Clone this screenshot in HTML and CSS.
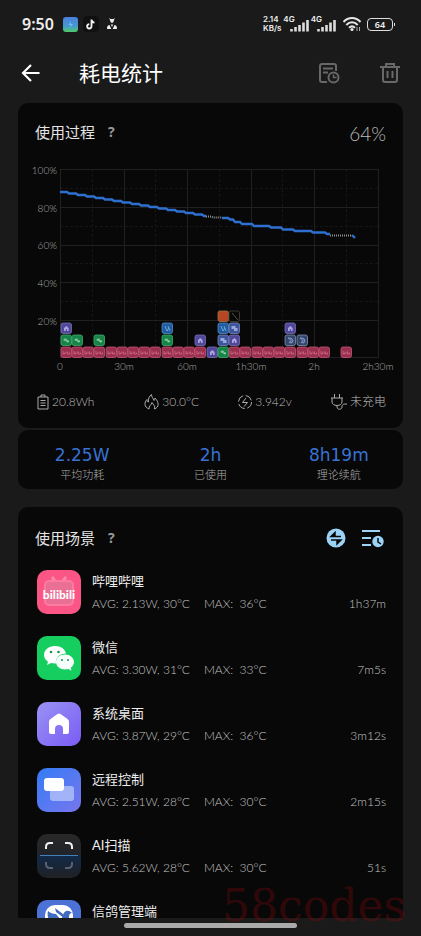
FILE: index.html
```html
<!DOCTYPE html>
<html lang="zh-CN">
<head>
<meta charset="utf-8">
<meta name="viewport" content="width=device-width, initial-scale=1">
<title>耗电统计</title>
<link rel="stylesheet" href="styles.css">
</head>
<body>
<div class="status">
  <span class="clock">9:50</span>
  <svg class="app-dot" viewBox="0 0 15 15" width="15" height="15"><defs><linearGradient id="gs" x1="0" y1="0" x2="0" y2="1"><stop offset="0" stop-color="#4a80dc"/><stop offset=".6" stop-color="#4797d0"/><stop offset="1" stop-color="#4fcb68"/></linearGradient></defs><rect width="15" height="15" rx="3" fill="url(#gs)"/><path d="M8 4 5.500 8H8L7 11l3-4H7.500z" fill="#78bdef"/></svg>
  <svg class="app-dot" viewBox="0 0 16 16" width="16" height="16"><rect width="16" height="16" rx="4" fill="#101010"/><path d="M8.500 3.500v6.800a2.200 2.200 0 1 1-2.200-2.200M8.500 4c.3 1.800 1.300 2.500 3 2.700" fill="none" stroke="#f2f2f2" stroke-width="1.800"/></svg>
  <svg class="app-dot last" viewBox="0 0 12 12" width="12" height="12" fill="#eee"><path d="m3 0 1.500 1h3L9 0 8 2 7.500 4 6 5 4.500 4 4 2zM1 11c0-3 1-4 2.500-4L5.300 11zM11 11c0-3-1-4-2.500-4L6.700 11zM4.800 6.500h2.400L6 9z"/></svg>
  <span class="speed"><span>2.14</span><span>KB/s</span></span>
  <span class="net">4G</span>
  <svg class="bars" viewBox="0 0 20 13" width="20" height="13"><path d="M2.500 10v2.500M6.500 8v4.500M10.500 6v6.500M14.500 3.500v9M18.500 1v11.500" stroke="#ddd" stroke-width="2.600"/></svg>
  <span class="net">4G</span>
  <svg class="bars" viewBox="0 0 20 13" width="20" height="13"><path d="M2.500 10v2.500M6.500 8v4.500M10.500 6v6.500M14.500 3.500v9M18.500 1v11.500" stroke="#ddd" stroke-width="2.600"/></svg>
  <svg class="wifi" viewBox="0 0 20 16" width="20" height="16"><path d="M1.500 6C6.500.8 13.500.8 18.500 6M4.300 9c3.400-3.600 8-3.600 11.400 0M7 11.700c2-1.800 4-1.800 6 0" fill="none" stroke="#e6e6e6" stroke-width="2"/><circle cx="10" cy="13.500" r="1.600" fill="#e6e6e6"/><path d="M15 11v4M17.500 11v4" stroke="#aaa"/></svg>
  <span class="battery">64</span>
</div>

<header class="bar">
  <button class="icon-btn" aria-label="返回"><svg viewBox="0 0 20 20" width="20" height="20"><path d="M18.500 10H2M10 2 2 10l8 8" fill="none" stroke="#fff" stroke-width="2.200"/></svg></button>
  <h1>耗电统计</h1>
  <button class="icon-btn" aria-label="历史记录"><svg viewBox="0 0 22 22" width="22" height="22" fill="none" stroke="#686868" stroke-width="2"><path d="M9 20H4a2 2 0 0 1-2-2V4a2 2 0 0 1 2-2h12a2 2 0 0 1 2 2v5M5 6.500h10M5 10.500h5"/><circle cx="15.500" cy="15.500" r="5"/><path d="M15.500 12.500v3h3" stroke-width="1.500"/></svg></button>
  <button class="icon-btn trash" aria-label="删除"><svg viewBox="0 0 22 22" width="22" height="22" fill="none" stroke="#686868" stroke-width="2"><path d="M1 5h20M7 5V2h8v3M4 5v13a2 2 0 0 0 2 2h10a2 2 0 0 0 2-2V5M8.500 9v7M13.500 9v7"/></svg></button>
</header>

<main>
  <section class="card process">
    <div class="card-head">
      <h2>使用过程</h2><button class="help" aria-label="使用过程说明">?</button>
      <span class="percent">64%</span>
    </div>
    <svg class="chart" viewBox="18 160 385 214" role="img" aria-label="电量变化">
      <defs>
        <g id="r"><rect width="10.500" height="10.500" rx="2" fill="#99304f" stroke="#c65475" stroke-width=".8"/><path d="M2 4v3h1.500V5.500M5 4.500V7M6.500 4.500V7h2V5.500" fill="none" stroke="#d87391" stroke-width=".7"/></g>
        <g id="g"><rect width="10.500" height="10.500" rx="2" fill="#168446" stroke="#45ab70" stroke-width=".8"/><ellipse cx="4.300" cy="4.700" rx="1.800" ry="1.300" fill="#7cc497"/><ellipse cx="6.600" cy="6.300" rx="1.500" ry="1.100" fill="#8fcea6"/></g>
        <g id="p"><rect width="10.500" height="10.500" rx="2" fill="#51479b" stroke="#7770b2" stroke-width=".8"/><path d="M3 8V5l2.300-2 2.300 2v3H6V6.300H4.700V8z" fill="#aaa6df"/></g>
        <g id="b"><rect width="10.500" height="10.500" rx="2" fill="#205c9f" stroke="#568ac2" stroke-width=".8"/><path d="m3 3 2 5 2-3M6 3l2 5" fill="none" stroke="#7bb7e8" stroke-width=".8"/></g>
        <g id="c"><rect width="10.500" height="10.500" rx="2" fill="#3d55a0" stroke="#7886ae" stroke-width=".8"/><path d="M2.500 3h4v3h-4zM5 5h3.500v3H5z" fill="#99a8d9"/></g>
        <g id="w"><rect width="10.500" height="10.500" rx="2" fill="#34466c" stroke="#8291b4" stroke-width=".8"/><path d="M3 3h3l2 2-1 3-3-.5 2-2z" fill="#4d62a0" stroke="#b4bad4" stroke-width=".6"/></g>
      </defs>
      <path class="minor" d="M92.500 169v189M155.500 169v189M219.500 169v189M282.500 169v189M346.500 169v189M60 188.500h318M60 226.500h318M60 263.500h318M60 301.500h318"/>
      <path class="grid" d="M60.500 169v189M124.500 169v189M187.500 169v189M251.500 169v189M314.500 169v189M378.500 169v189M60 169.500h318M60 207.500h318M60 245.500h318M60 282.500h318M60 320.500h318M60 357.500h318"/>
      <g class="y-axis"><text x="57" y="174">100%</text><text x="57" y="212">80%</text><text x="57" y="249">60%</text><text x="57" y="287">40%</text><text x="57" y="325">20%</text></g>
      <g class="x-axis"><text x="60" y="370">0</text><text x="124" y="370">30m</text><text x="187" y="370">60m</text><text x="251" y="370">1h30m</text><text x="314" y="370">2h</text><text x="378" y="370">2h30m</text></g>
      <path class="level" d="M60 192h7l2 1.500h7l2 1.500h7l2 1.500h7l2 1.500h7l2 1.500h7l2 1.500h7l2 1.500h7l2 1.500h7l2 1.500h7l2 1.500h7l2 1.500h7l2 1.500h7l2 1.500h7l2 1.500h7l2 1.500h7l2 1.500h2M222 218h6l2 1.500h3l2 2.500h5l2 2h10l2 2h15l2 1.500h10l2 2h10l2 1.500h16l2 1.500h12l2 1.500h3M352 235l3 3"/>
      <path class="idle" d="M206 216.500h5l2 1h9M330 235.500h22"/>
      <use href="#r" x="61" y="347"/><use href="#r" x="72" y="347"/><use href="#r" x="83" y="347"/><use href="#r" x="94" y="347"/><use href="#r" x="106" y="347"/><use href="#r" x="117" y="347"/><use href="#r" x="128" y="347"/><use href="#r" x="139" y="347"/><use href="#r" x="150" y="347"/><use href="#r" x="162" y="347"/><use href="#r" x="173" y="347"/><use href="#r" x="184" y="347"/><use href="#r" x="195" y="347"/><use href="#p" x="207" y="347"/><use href="#g" x="218" y="347"/><use href="#r" x="229" y="347"/><use href="#r" x="240" y="347"/><use href="#r" x="252" y="347"/><use href="#r" x="263" y="347"/><use href="#r" x="274" y="347"/><use href="#r" x="285" y="347"/><use href="#r" x="297" y="347"/><use href="#r" x="308" y="347"/><use href="#r" x="319" y="347"/><use href="#r" x="341" y="347"/>
      <use href="#g" x="61" y="335"/><use href="#g" x="72" y="335"/><use href="#g" x="94" y="335"/><use href="#g" x="162" y="335"/><use href="#p" x="195" y="335"/><use href="#c" x="218" y="335"/><use href="#p" x="229" y="335"/><use href="#w" x="285" y="335"/><use href="#w" x="297" y="335"/>
      <use href="#p" x="61" y="323"/><use href="#b" x="162" y="323"/><use href="#b" x="218" y="323"/><use href="#c" x="229" y="323"/><use href="#p" x="285" y="323"/>
      <rect x="218" y="311" width="10.500" height="10.500" rx="2" fill="#b74625" stroke="#9b7c45" stroke-width=".8"/>
      <rect x="229" y="311" width="10.500" height="10.500" rx="2" fill="#080808" stroke="#4b4638" stroke-width=".8"/><path d="m232 313 6 7" stroke="#6b6754" stroke-width=".8"/>
    </svg>
    <ul class="facts">
      <li><svg viewBox="0 0 14 18" width="14" height="18"><path d="M2 4h10v12H2zM5 4V2h4v2M4.500 7.500h5M4.500 10h5M4.500 12.500h5"/></svg>20.8Wh</li>
      <li><svg viewBox="0 0 16 18" width="16" height="18"><path d="M5 16C0 14 0 9.500 3 6.500c0 2 .5 2.500 1.500 2.500C4 6 5 3.500 7.500 1.500 7.500 4 9 5 10 7.500c.8-.5 1-1.500 1-2.500 4 4 4.500 9-.5 11 1-3-1-4-2.500-6.500C7.500 12 4.500 13 5 16z"/></svg>30.0°C</li>
      <li><svg viewBox="0 0 16 18" width="16" height="18"><circle cx="8" cy="9" r="6.500" stroke-dasharray="7.500 2.710"/><path d="M9 5 5.500 9.500h5L7 13.500"/></svg>3.942v</li>
      <li><svg viewBox="0 0 18 18" width="18" height="18"><path d="M4.500 1v4M9.500 1v4M1 5h12M2 5v4c0 2 2 3.500 5 3.500s5-1.500 5-3.500V5M7 12.500V14c0 3 5 3 5 0s2-3 5-3"/></svg>未充电</li>
    </ul>
  </section>

  <section class="card totals">
    <div><strong>2.25W</strong><span>平均功耗</span></div>
    <div><strong>2h</strong><span>已使用</span></div>
    <div><strong>8h19m</strong><span>理论续航</span></div>
  </section>

  <section class="card scenes">
    <div class="card-head">
      <h2>使用场景</h2><button class="help" aria-label="使用场景说明">?</button>
      <button class="icon-btn tool" aria-label="切换"><svg viewBox="0 0 20 20" width="20" height="20"><circle cx="10" cy="10" r="9.500" fill="#9bd2f6"/><path d="M15 8.500H5L9 4.500v4M5 12h10l-4 4v-4" fill="#080808" stroke="#080808" stroke-width="1.500"/></svg></button>
      <button class="icon-btn" aria-label="按时间排序"><svg viewBox="0 0 24 20" width="24" height="20"><path d="M0 3h18M0 10h9M0 17h9" stroke="#9bd2f6" stroke-width="2"/><circle cx="16" cy="13.500" r="5.700" fill="#9bd2f6"/><path d="M16 10v4l3 2" fill="none" stroke="#080808" stroke-width="1.500"/></svg></button>
    </div>
    <ul class="apps">
      <li>
        <svg class="logo" viewBox="0 0 44 44"><rect width="44" height="44" rx="10" fill="#fb5585"/><path d="m15 7 3 4M29 7l-3 4" stroke="#fc89a9" stroke-width="3"/><rect x="8" y="11" width="28" height="24" rx="4" fill="#e96f94" stroke="#fc7b9f" stroke-width="2"/><text class="brand" x="22" y="29">bilibili</text></svg>
        <div class="info"><h3>哔哩哔哩</h3><p><span>AVG: 2.13W, 30°C</span><span>MAX:&nbsp; 36°C</span></p></div><time>1h37m</time>
      </li>
      <li>
        <svg class="logo" viewBox="0 0 44 44"><rect width="44" height="44" rx="10" fill="#15ce5f"/><path d="M18 10C11.500 10 7 14 7 19c0 3 1.500 5 4 6.700L10 29l4-2 4 .5h1c-1-6 4-10 10-10C28 13 24 10 18 10z" fill="#fff"/><path d="M28 18.500c-5.500 0-9 3.500-9 7.500s4 7.500 9 7.500l3.300-.5 3.200 1.700-.8-3C35.700 30.500 37 28.500 37 26c0-4-4-7.500-9-7.500z" fill="#f6fff9"/><g fill="#17984c"><circle cx="14" cy="16" r="1.300"/><circle cx="21.500" cy="16" r="1.300"/><circle cx="25" cy="24" r="1"/><circle cx="31" cy="24" r="1"/></g></svg>
        <div class="info"><h3>微信</h3><p><span>AVG: 3.30W, 31°C</span><span>MAX:&nbsp; 33°C</span></p></div><time>7m5s</time>
      </li>
      <li>
        <svg class="logo" viewBox="0 0 44 44"><defs><linearGradient id="gh" x1="0" y1="0" x2="1" y2="1"><stop stop-color="#9992f4"/><stop offset="1" stop-color="#7a5cf5"/></linearGradient></defs><rect width="44" height="44" rx="10" fill="url(#gh)"/><path d="M14 32q-2 0-2-2V20q0-2 1.500-3l7-5q1.500-1 3 0l7 5q1.500 1 1.500 3v10q0 2-2 2h-4v-5a4 4 0 0 0-8 0v5z" fill="#fff"/></svg>
        <div class="info"><h3>系统桌面</h3><p><span>AVG: 3.87W, 29°C</span><span>MAX:&nbsp; 36°C</span></p></div><time>3m12s</time>
      </li>
      <li>
        <svg class="logo" viewBox="0 0 44 44"><defs><linearGradient id="gr" x1="0" y1="0" x2="1" y2="1"><stop stop-color="#337cf7"/><stop offset="1" stop-color="#7876ec"/></linearGradient></defs><rect width="44" height="44" rx="10" fill="url(#gr)"/><rect x="13" y="18" width="24" height="15" rx="3" fill="#b9c7fb" fill-opacity=".75"/><rect x="7" y="10" width="20" height="13" rx="3" fill="#fff"/></svg>
        <div class="info"><h3>远程控制</h3><p><span>AVG: 2.51W, 28°C</span><span>MAX:&nbsp; 30°C</span></p></div><time>2m15s</time>
      </li>
      <li>
        <svg class="logo" viewBox="0 0 44 44"><defs><linearGradient id="ga" x1="0" y1="0" x2="0" y2="1"><stop stop-color="#282828"/><stop offset=".48" stop-color="#202329"/><stop offset=".5" stop-color="#122947"/><stop offset="1" stop-color="#202124"/></linearGradient></defs><rect width="44" height="44" rx="10" fill="url(#ga)"/><path d="M9 15v-2q0-4 4-4h3M28 9h3q4 0 4 4v2" fill="none" stroke="#eee" stroke-width="2"/><path d="M9 28v2q0 4 4 4h3M28 34h3q4 0 4-4v-2" fill="none" stroke="#596273" stroke-width="2"/><path d="M3 21.500h38" stroke="#4381b9"/></svg>
        <div class="info"><h3>AI扫描</h3><p><span>AVG: 5.62W, 28°C</span><span>MAX:&nbsp; 30°C</span></p></div><time>51s</time>
      </li>
      <li>
        <svg class="logo" viewBox="0 0 44 44"><rect width="44" height="44" rx="10" fill="#4d72d6"/><rect x="8" y="5" width="28" height="34" rx="10" fill="#fff"/><path d="M11 11c2 2 5 3 8 3l5 6 2-5c1-4 5-6 9-2-3 0-3 3-3 6 0 7-5 12-11 12-5 0-9-3-10-7l3-1c-3-3-4-8-3-12z" fill="#416bc0"/><path d="m18 8 8 6 1 4-8-6z" fill="#416bc0"/></svg>
        <div class="info"><h3>信鸽管理端</h3></div>
      </li>
    </ul>
  </section>
</main>
<footer class="nav"><span class="handle"></span></footer>
<div class="watermark">58codes</div>
</body>
</html>
```
FILE: styles.css
```css
* { box-sizing: border-box; }
body {
  margin: 0;
  height: 100vh;
  display: flex;
  flex-direction: column;
  overflow: hidden;
  position: relative;
  background: #1a1a1a;
  color: #ddd;
  font-family: Lato, "Noto Sans CJK SC", sans-serif;
}
h1, h2, h3, p, ul { margin: 0; padding: 0; font-weight: 400; }
ul { list-style: none; }
button { padding: 0; border: 0; background: none; color: inherit; font: inherit; }
svg { display: block; flex: none; }

.status {
  flex: none;
  display: flex;
  align-items: center;
  height: 48px;
  padding: 0 28px 0 22px;
  font-family: "Noto Sans", sans-serif;
  font-weight: 600;
  color: #eee;
}
.clock { font-size: 16px; margin-right: 9px; }
.app-dot { margin-right: 5px; }
.app-dot.last { margin: 0 auto 0 2px; }
.speed { display: flex; flex-direction: column; font: 600 8px/9px Inter, sans-serif; margin-right: 2px; }
.net { font: 600 8px/9px Inter, sans-serif; align-self: flex-start; margin-top: 15px; }
.bars { margin: 2px 2px 0 -6px; }
.wifi { margin: 0 5px 0 4px; }
.battery {
  position: relative;
  width: 26px;
  height: 13px;
  border: 1px solid #ddd;
  border-radius: 4px;
  font-size: 9px;
  line-height: 11px;
  text-align: center;
}
.battery::after {
  content: "";
  position: absolute;
  right: -3px;
  top: 4px;
  width: 1px;
  height: 3px;
  background: #ddd;
}

.bar { flex: none; display: flex; align-items: center; height: 49px; padding: 0 20px 0 21px; }
.bar h1 { flex: 1; margin-left: 38px; font-size: 21px; line-height: 28px; color: #fff; }
.trash { margin-left: 39px; }

main { flex: 1; min-height: 0; overflow: hidden; padding: 6px 18px 0; }
.card { background: #080808; border-radius: 10px; }
.process { padding-bottom: 14px; }
.card-head { display: flex; align-items: center; height: 57px; padding: 0 17px; }
.card-head h2 { font-size: 15px; line-height: 22px; color: #e4e4e4; }
.help { margin: 0 auto 0 13px; font: 700 14px/20px "Noto Sans", sans-serif; color: #999; }
.percent { font-size: 19px; line-height: 24px; margin-top: 4px; font-weight: 300; color: #bbb; }
.chart { width: 100%; height: auto; }
.chart text { font-size: 10px; font-weight: 300; fill: #aaa; }
.y-axis { text-anchor: end; }
.x-axis { text-anchor: middle; }
.grid { stroke: #202020; }
.minor { stroke: #151515; stroke-dasharray: 3 2; }
.level { fill: none; stroke: #2d70cf; stroke-width: 2.400; }
.idle { fill: none; stroke: #8e8e8e; stroke-width: 2; stroke-dasharray: 1 1; }
.facts {
  display: grid;
  grid-template-columns: 7fr 6fr 6fr auto;
  margin-top: 16px;
  padding: 0 17px 0 18px;
  font-size: 12px;
  line-height: 24px;
  font-weight: 300;
  color: #bbb;
}
.facts li { display: flex; align-items: center; gap: 2px; }
.facts svg { fill: none; stroke: #aaa; stroke-width: 1; }

.totals {
  display: grid;
  grid-template-columns: repeat(3, 1fr);
  margin-top: 2px;
  padding: 14px 0 6px;
  text-align: center;
}
.totals div { display: flex; flex-direction: column; }
.totals strong { font: 400 17px/23px "DejaVu Sans", sans-serif; color: #3872d3; }
.totals span { font-size: 11px; line-height: 16px; font-weight: 300; color: #aaa; }

.scenes { margin-top: 18px; }
.scenes .card-head { height: 61px; }
.tool { margin-right: 16px; }
.apps { padding: 0 17px 0 19px; }
.apps li { display: flex; height: 48px; margin-bottom: 18px; padding-top: 2px; }
.logo { width: 44px; height: 44px; }
.brand { font: 900 12px Lato, sans-serif; text-anchor: middle; fill: #fff; }
.info { flex: 1; margin-left: 11px; }
.info h3 { margin-top: 1px; font-size: 13px; line-height: 20px; color: #eee; }
.info p { display: flex; gap: 14px; margin-top: 3px; font-size: 12px; line-height: 20px; font-weight: 300; color: #c4c4c4; white-space: nowrap; }
.apps time { align-self: flex-end; margin-bottom: 2px; font-size: 12px; line-height: 20px; font-weight: 300; color: #c4c4c4; }

.nav { flex: none; display: flex; justify-content: center; height: 18px; padding-top: 5px; }
.handle { width: 41%; height: 5px; border-radius: 3px; background: #aaa; }
.watermark {
  position: absolute;
  right: 15px;
  bottom: 4px;
  font: 44px/52px "DejaVu Serif", serif;
  color: rgba(130, 10, 14, .35);
  pointer-events: none;
}
```
